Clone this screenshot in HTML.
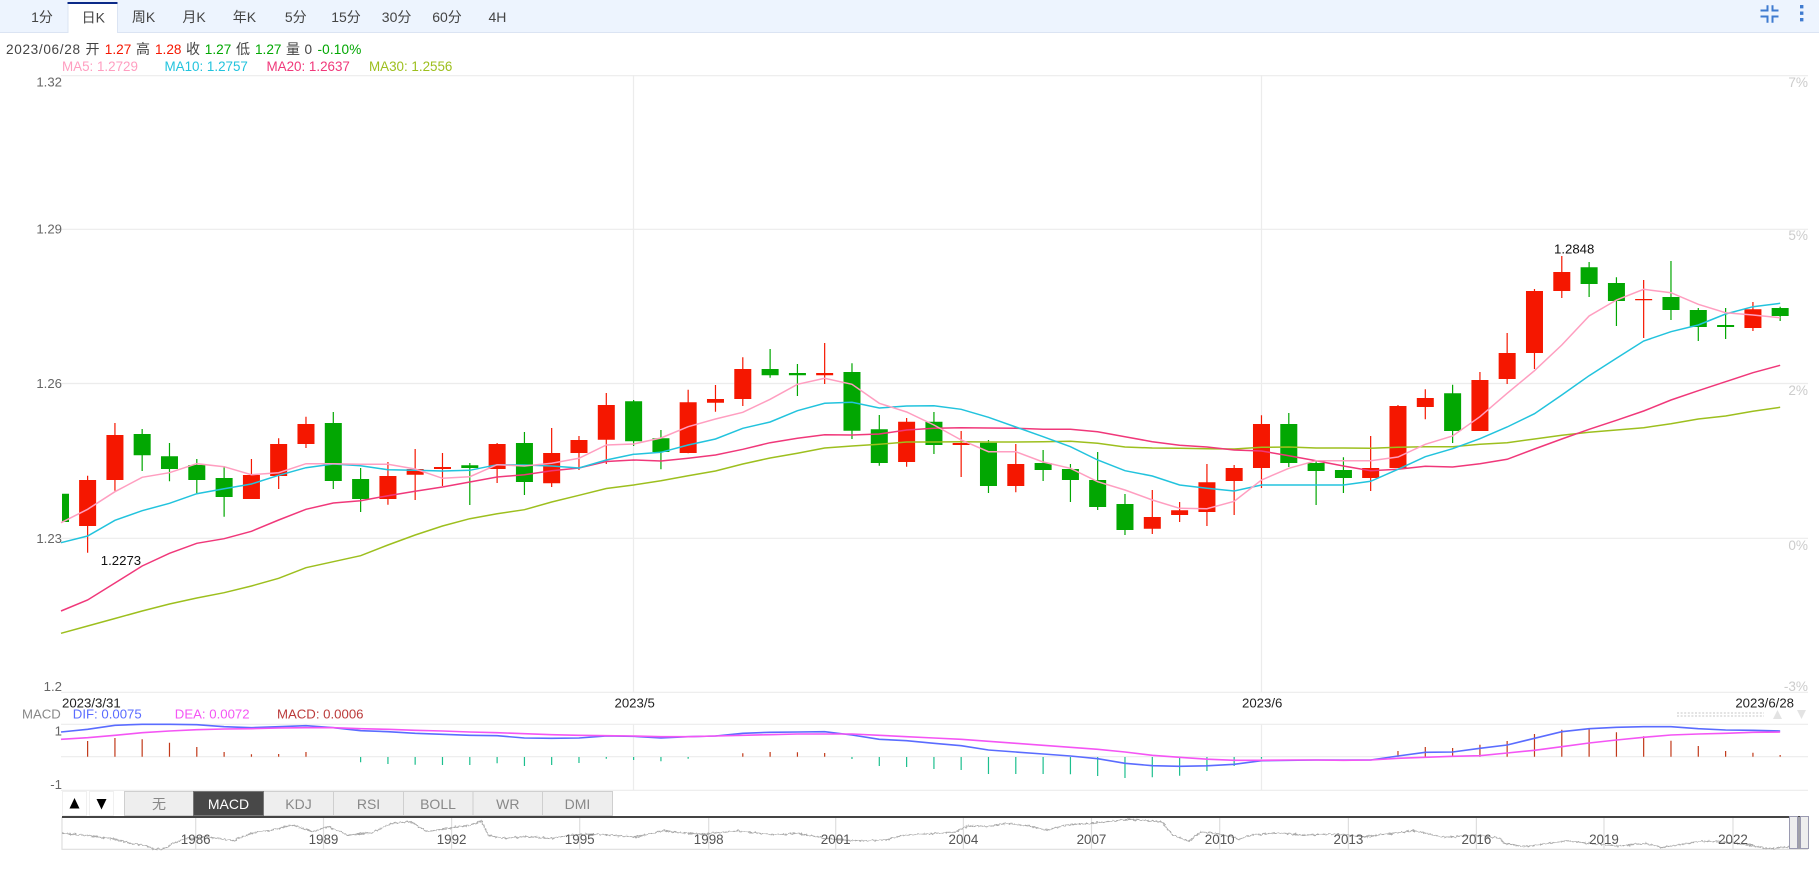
<!DOCTYPE html>
<html lang="zh"><head><meta charset="utf-8"><title>K</title>
<style>
html,body{margin:0;padding:0;background:#fff;width:1819px;height:893px;overflow:hidden}
svg{display:block}
text{font-family:"Liberation Sans","Noto Sans CJK SC",sans-serif;font-size:13.2px}
.t{font-size:14px;fill:#444;text-anchor:middle}
.i{font-size:14px;fill:#444}
.n{font-size:13.6px}
.m{font-size:13.4px}
.r{fill:#f51700}.g{fill:#02a702}
.l{fill:#666;text-anchor:end}
.p{fill:#ccc;text-anchor:end;font-size:13.6px}
.d{fill:#222}
.b{font-size:14px;fill:#888;text-anchor:middle}
.y{fill:#555;text-anchor:middle;font-size:13.4px}
</style></head><body>
<svg width="1819" height="893" viewBox="0 0 1819 893" xmlns="http://www.w3.org/2000/svg">
<defs><filter id="j" x="-2%" y="-30%" width="104%" height="160%"><feTurbulence type="fractalNoise" baseFrequency=".35" numOctaves="2" seed="4"/><feDisplacementMap in="SourceGraphic" scale="3.5" xChannelSelector="R" yChannelSelector="G"/></filter></defs>
<rect width="1819" height="893" fill="#fff"/>
<!-- top tabs -->
<rect width="1819" height="32" fill="#edf4fe"/>
<rect y="32" width="1819" height="1" fill="#dbe4f3"/>
<rect x="67.5" y="2" width="50" height="31" fill="#fff"/>
<rect x="67.5" y="2" width="50" height="2" fill="#0b2a88"/>
<rect x="67.5" y="4" width="1" height="29" fill="#dbe4f3"/><rect x="117" y="4" width="1" height="29" fill="#dbe4f3"/>
<text class="t" x="42" y="22">1分</text><text class="t" x="93.3" y="22.6">日K</text><text class="t" x="143.5" y="22">周K</text><text class="t" x="194" y="22">月K</text><text class="t" x="244.4" y="22">年K</text><text class="t" x="295.8" y="22">5分</text><text class="t" x="346" y="22">15分</text><text class="t" x="396.6" y="22">30分</text><text class="t" x="447" y="22">60分</text><text class="t" x="497.4" y="22">4H</text>
<path d="M1760.5 10.5H1767.5V5.3M1778.5 10.5H1772.5V5.3M1760.5 16.5H1767.5V22.7M1778.5 16.5H1772.5V22.7" fill="none" stroke="#3f7bd0" stroke-width="2"/>
<path d="M1800 5h3.4v3.4H1800zM1800 11.5h3.4v3.4H1800zM1800 18h3.4v3.4H1800z" fill="#3f7bd0"/>
<!-- info -->
<text class="i n" x="6" y="54" textLength="74" lengthAdjust="spacing">2023/06/28</text><text class="i" x="85.5" y="54">开</text><text class="i r n" x="104.8" y="54">1.27</text><text class="i" x="136" y="54">高</text><text class="i r n" x="155" y="54">1.28</text><text class="i" x="186" y="54">收</text><text class="i g n" x="204.8" y="54">1.27</text><text class="i" x="236" y="54">低</text><text class="i g n" x="255" y="54">1.27</text><text class="i" x="286" y="54">量</text><text class="i n" x="304.5" y="54">0</text><text class="i g n" x="317.5" y="54" textLength="43.8" lengthAdjust="spacing">-0.10%</text>
<text class="m" x="62" y="71" fill="#ff9ec0">MA5: 1.2729</text><text class="m" x="164.5" y="71" fill="#22c3dd">MA10: 1.2757</text><text class="m" x="266.5" y="71" fill="#f0387a">MA20: 1.2637</text><text class="m" x="369" y="71" fill="#9dbf1e">MA30: 1.2556</text>
<!-- grid -->
<path d="M61 75.7H1808M61 229.3H1808M61 383.5H1808M61 538.3H1808M61 692.3H1808M61 724.3H1808M61 756.7H1808M61 790.3H1808M633.5 75V692M633.5 724V790M1261.5 75V692M1261.5 724V790" stroke="#ececec" stroke-width="1.2" fill="none"/>
<text class="l" x="62" y="86.5">1.32</text><text class="l" x="62" y="233.5">1.29</text><text class="l" x="62" y="388">1.26</text><text class="l" x="62" y="543">1.23</text><text class="l" x="62" y="691">1.2</text>
<text class="p" x="1808" y="87">7%</text><text class="p" x="1808" y="240">5%</text><text class="p" x="1808" y="395">2%</text><text class="p" x="1808" y="550">0%</text><text class="p" x="1808" y="691">-3%</text>
<g transform="translate(60.3 0) scale(1.00073 1) translate(-60.3 0)">
<!-- candles wicks -->
<path fill="none" stroke="#f51700" stroke-width="1.2" d="M87.6 475.7V552.7M114.9 423V490.7M251.3 459V499M278.5 438.3V489M305.8 416.7V448M387.7 462V504.7M414.9 449V500M442.2 453V486M496.8 443V483M551.3 428V487M578.6 436V470M605.9 393V464M687.7 389.7V453.3M715 385V411.7M742.3 357.3V406M824.1 343V384M906 418V466.7M960.5 431V477M1015.1 444V492.3M1151.5 490V534M1178.8 502V522M1206.1 464V526M1233.3 465V515M1260.6 415.3V488M1369.7 436V491M1397 405V468M1424.3 389.3V419.3M1478.9 372V431M1506.1 333V384M1533.4 289V369M1560.7 256V298M1642.5 280V338M1751.7 302V331"/>
<path fill="none" stroke="#02a702" stroke-width="1.2" d="M142.1 429V471M169.4 443V481.3M196.7 459V493.3M224 466V516.7M333.1 412V489M360.4 468V512M469.5 463V505M524.1 432V495M633.2 400V446M660.5 430V469.3M769.6 349V377.7M796.9 364V396M851.4 363.3V439M878.7 415V465.7M933.3 412V454M987.8 440V493M1042.4 450V481M1069.7 464V502M1096.9 452V510M1124.2 494V535M1287.9 413V467M1315.2 460V505M1342.5 457.3V493M1451.6 384.7V443M1588 262V297M1615.3 277.3V326M1669.8 261V320M1697.1 308V341M1724.4 308V339M1778.9 306.7V321"/>
<!-- candle bodies -->
<path fill="#f51700" d="M79.1 480h17v46h-17zM106.4 435h17v45h-17zM242.8 475h17v24h-17zM270 444h17v32h-17zM297.3 424h17v20h-17zM379.2 476h17v23h-17zM406.4 469h17v5.7h-17zM433.7 467h17v2h-17zM488.3 444h17v25h-17zM542.8 453h17v30.3h-17zM570.1 440h17v13h-17zM597.4 405h17v34.7h-17zM679.2 402.3h17v50.7h-17zM706.5 399h17v3.7h-17zM733.8 369h17v30h-17zM815.6 373h17v2.3h-17zM897.5 421.7h17v40.3h-17zM952 443h17v2h-17zM1006.6 464h17v22h-17zM1143 517h17v11.7h-17zM1170.3 510.3h17v4.7h-17zM1197.6 482.3h17v29.7h-17zM1224.8 468h17v13h-17zM1252.1 424h17v44h-17zM1361.2 468h17v10h-17zM1388.5 406h17v62h-17zM1415.8 398h17v9h-17zM1470.4 380h17v51h-17zM1497.6 353h17v26h-17zM1524.9 291h17v62h-17zM1552.2 272h17v19h-17zM1634 299h17v1.2h-17zM1743.2 309.3h17v18.7h-17z"/>
<path fill="#02a702" d="M62 493.7h7v28.3h-7zM133.6 434h17v21.3h-17zM160.9 456.3h17v12.7h-17zM188.2 465h17v15h-17zM215.5 478h17v19h-17zM324.6 423h17v58h-17zM351.9 479h17v20h-17zM461 465.3h17v2.7h-17zM515.6 443h17v39h-17zM624.7 401.3h17v40h-17zM652 438.3h17v13.7h-17zM761.1 369h17v6.3h-17zM788.4 373h17v2.3h-17zM842.9 372h17v58.7h-17zM870.2 429.3h17v33.7h-17zM924.8 421.7h17v23.3h-17zM979.3 442.7h17v43.3h-17zM1033.9 463h17v7h-17zM1061.2 469h17v11h-17zM1088.4 480h17v27h-17zM1115.7 504h17v26h-17zM1279.4 424h17v39h-17zM1306.7 463h17v8h-17zM1334 470h17v8h-17zM1443.1 393.3h17v37.7h-17zM1579.5 267.3h17v16.7h-17zM1606.8 283h17v18h-17zM1661.3 297h17v13h-17zM1688.6 310h17v17h-17zM1715.9 325h17v2h-17zM1770.4 308h17v8h-17z"/>
<!-- MA lines -->
<polyline fill="none" stroke="#9dbf1e" stroke-width="1.5" points="61,633.3 87.6,626 114.9,618.5 142.1,611 169.4,604 196.7,598 224,592.7 251.3,586 278.5,578.3 305.8,567.7 333.1,561.7 360.4,555.7 387.7,545 414.9,535 442.2,526 469.5,518.7 496.8,513.7 524.1,509.7 551.3,502 578.6,495.3 605.9,488.5 633.2,485 660.5,480.7 687.7,475.7 715,471 742.3,464 769.6,458 796.9,453.3 824.1,448 851.4,446 878.7,444.3 906,442 933.3,442 960.5,441.7 987.8,442 1015.1,442 1042.4,441.7 1069.7,441.3 1096.9,443.3 1124.2,447 1151.5,448 1178.8,448.3 1206.1,448.7 1233.3,449 1260.6,447.3 1287.9,447 1315.2,448 1342.5,448 1369.7,448.3 1397,447.3 1424.3,446.7 1451.6,446.7 1478.9,444.3 1506.1,442.7 1533.4,439 1560.7,435.3 1588,432.3 1615.3,430 1642.5,427.7 1669.8,423.7 1697.1,419 1724.4,416 1751.7,411.3 1778.9,407.3"/>
<polyline fill="none" stroke="#f0387a" stroke-width="1.5" points="61,611 87.6,600 114.9,583 142.1,566 169.4,553.3 196.7,543.3 224,538.7 251.3,531.3 278.5,520 305.8,509.3 333.1,503 360.4,500.7 387.7,495.7 414.9,491.3 442.2,487 469.5,482 496.8,477 524.1,474.7 551.3,470.7 578.6,468 605.9,461.5 633.2,460 660.5,461 687.7,458.3 715,455 742.3,449.3 769.6,442.7 796.9,438.3 824.1,434.7 851.4,435 878.7,434 906,430 933.3,428.3 960.5,427.7 987.8,428 1015.1,428.3 1042.4,429.3 1069.7,429.3 1096.9,431.7 1124.2,436.7 1151.5,441.7 1178.8,445.3 1206.1,447 1233.3,450 1260.6,451 1287.9,455.7 1315.2,460.7 1342.5,466 1369.7,470.7 1397,469.3 1424.3,466.3 1451.6,467 1478.9,463.7 1506.1,459.3 1533.4,449 1560.7,439 1588,429.3 1615.3,420.3 1642.5,411 1669.8,400 1697.1,390.7 1724.4,381.7 1751.7,372.7 1778.9,365.3"/>
<polyline fill="none" stroke="#22c3dd" stroke-width="1.5" points="61,542.7 87.6,536 114.9,520.3 142.1,510.7 169.4,503.3 196.7,493.7 224,488.7 251.3,484 278.5,475.3 305.8,467.7 333.1,464 360.4,465.7 387.7,469.7 414.9,470.3 442.2,471 469.5,470.3 496.8,464.7 524.1,465 551.3,466 578.6,468 605.9,460 633.2,454.3 660.5,452.3 687.7,445 715,439 742.3,428.3 769.6,422 796.9,410.7 824.1,403.3 851.4,402.3 878.7,408 906,406 933.3,405.7 960.5,409.3 987.8,417.3 1015.1,427 1042.4,436.7 1069.7,446.7 1096.9,460 1124.2,470.7 1151.5,476 1178.8,485 1206.1,488.3 1233.3,491 1260.6,485 1287.9,485 1315.2,485 1342.5,485 1369.7,481.3 1397,469.3 1424.3,456.7 1451.6,448.7 1478.9,438.7 1506.1,427 1533.4,413.7 1560.7,395 1588,375.7 1615.3,358.3 1642.5,341 1669.8,331.7 1697.1,325 1724.4,314 1751.7,306.7 1778.9,303.3"/>
<polyline fill="none" stroke="#ff9ec0" stroke-width="1.5" points="61,522.7 87.6,509.3 114.9,491.7 142.1,477.3 169.4,472.7 196.7,463.7 224,466.7 251.3,474.7 278.5,472.7 305.8,463.7 333.1,463.7 360.4,464.3 387.7,464.3 414.9,469 442.2,478.3 469.5,476.7 496.8,464.7 524.1,466 551.3,463.3 578.6,458.3 605.9,445 633.2,444 660.5,438 687.7,426.7 715,419 742.3,412.3 769.6,399.3 796.9,384.3 824.1,378.3 851.4,384.3 878.7,403.3 906,412 933.3,425 960.5,440 987.8,451.7 1015.1,451.7 1042.4,462 1069.7,468.3 1096.9,481.7 1124.2,490 1151.5,500 1178.8,508.3 1206.1,508.7 1233.3,501.3 1260.6,480 1287.9,468.3 1315.2,460.7 1342.5,460.7 1369.7,460.7 1397,457 1424.3,444.3 1451.6,436 1478.9,416.7 1506.1,393.3 1533.4,370.7 1560.7,345 1588,316 1615.3,300 1642.5,289.3 1669.8,292.7 1697.1,304.3 1724.4,312.7 1751.7,315 1778.9,317.7"/>
</g>
<text x="100.8" y="565" fill="#111">1.2273</text><text x="1554" y="253.5" fill="#111">1.2848</text>
<!-- dates -->
<text class="d" x="62" y="707.5">2023/3/31</text><text class="d" x="614.5" y="707.5">2023/5</text><text class="d" x="1242" y="707.5">2023/6</text><text class="d" x="1794" y="707.5" text-anchor="end">2023/6/28</text>
<!-- macd -->
<text x="22" y="718.5" fill="#888">MACD</text><text x="72.8" y="718.5" fill="#5a6cff">DIF: 0.0075</text><text x="174.8" y="718.5" fill="#f455f4">DEA: 0.0072</text><text x="277" y="718.5" fill="#bb3a3a">MACD: 0.0006</text>
<text class="l" x="62" y="735.5" fill="#555">1</text><text class="l" x="62" y="789" fill="#555">-1</text>
<path d="M1677 713h87M1677 716h87" stroke="#e3e3e3" stroke-width="2" stroke-dasharray="2 1.6" fill="none"/>
<path d="M1773 719l4.5-9 4.5 9zM1797 710h9l-4.5 9z" fill="#e3e3e3"/>
<g transform="translate(60.3 0) scale(1.00073 1) translate(-60.3 0)">
<path fill="none" stroke="#c23a1a" stroke-width="1.2" d="M87.6 756.7V741M114.9 756.7V738M142.1 756.7V739.3M169.4 756.7V742.7M196.7 756.7V747M224 756.7V752M251.3 756.7V754.3M278.5 756.7V754M305.8 756.7V752M742.3 756.7V753.3M769.6 756.7V752M796.9 756.7V752.3M824.1 756.7V753M1397 756.7V751M1424.3 756.7V747M1451.6 756.7V748M1478.9 756.7V744.7M1506.1 756.7V741M1533.4 756.7V734M1560.7 756.7V729.7M1588 756.7V729.3M1615.3 756.7V732.3M1642.5 756.7V736.3M1669.8 756.7V740.7M1697.1 756.7V746M1724.4 756.7V751M1751.7 756.7V752.7M1778.9 756.7V755"/>
<path fill="none" stroke="#1dbf8e" stroke-width="1.2" d="M360.4 757V762.3M387.7 757V764M414.9 757V764.7M442.2 757V765M469.5 757V765M496.8 757V763.3M524.1 757V766M551.3 757V765M578.6 757V763M605.9 757V758.7M633.2 757V760M660.5 757V761.3M687.7 757V758.7M851.4 757V759M878.7 757V766M906 757V767M933.3 757V769M960.5 757V770M987.8 757V774M1015.1 757V774M1042.4 757V774M1069.7 757V774.3M1096.9 757V776M1124.2 757V778M1151.5 757V777.3M1178.8 757V775.7M1206.1 757V771M1233.3 757V766M1260.6 757V758.7"/>
<polyline fill="none" stroke="#5a6cff" stroke-width="1.6" points="61,732 87.6,729.3 114.9,725.3 142.1,724.3 169.4,724.3 196.7,724.7 224,726.7 251.3,727.7 278.5,726.7 305.8,725.7 333.1,727.7 360.4,730.7 387.7,731.7 414.9,733.3 442.2,734.3 469.5,735.3 496.8,735.7 524.1,738 551.3,738.3 578.6,738 605.9,736 633.2,736.3 660.5,738 687.7,736.7 715,736 742.3,733.3 769.6,732.3 796.9,732 824.1,731.7 851.4,735 878.7,739.3 906,740.7 933.3,743.3 960.5,745.7 987.8,750 1015.1,752 1042.4,754 1069.7,756 1096.9,758.7 1124.2,763.3 1151.5,765.7 1178.8,766.3 1206.1,765.8 1233.3,764.3 1260.6,760.7 1287.9,760.3 1315.2,760 1342.5,760 1369.7,760 1397,756 1424.3,752.3 1451.6,752 1478.9,748.3 1506.1,745 1533.4,738.3 1560.7,731.7 1588,728.7 1615.3,727.3 1642.5,726.7 1669.8,726.7 1697.1,728.7 1724.4,730 1751.7,730.3 1778.9,731"/>
<polyline fill="none" stroke="#f455f4" stroke-width="1.6" points="61,739.3 87.6,737.7 114.9,735.3 142.1,732.7 169.4,731 196.7,729.7 224,729 251.3,728.7 278.5,728 305.8,727.7 333.1,727.7 360.4,728.7 387.7,729.3 414.9,730.3 442.2,731 469.5,732 496.8,732.7 524.1,733.7 551.3,734.7 578.6,735.3 605.9,735.7 633.2,736 660.5,736.7 687.7,736.7 715,736 742.3,735.3 769.6,734.7 796.9,734 824.1,734 851.4,734 878.7,735.3 906,736.7 933.3,738 960.5,739.3 987.8,741.3 1015.1,743.3 1042.4,745.3 1069.7,747.3 1096.9,749.3 1124.2,752 1151.5,755.3 1178.8,757.3 1206.1,759.2 1233.3,760.3 1260.6,760.3 1287.9,760 1315.2,760 1342.5,760.3 1369.7,760 1397,758.3 1424.3,757.3 1451.6,756.3 1478.9,755.7 1506.1,753 1533.4,750.3 1560.7,746.7 1588,743 1615.3,740 1642.5,737.3 1669.8,735 1697.1,734 1724.4,733.3 1751.7,732.3 1778.9,732"/>
</g>
<!-- indicator buttons -->
<rect x="62.5" y="791.5" width="24" height="24" fill="#fff" stroke="#f0f0f0"/><rect x="89.5" y="791.5" width="24" height="24" fill="#fff" stroke="#f0f0f0"/>
<path d="M69.5 808.5l5-10.5 5 10.5zM96.5 799h10l-5 10.5z" fill="#000"/>
<g fill="#eee" stroke="#cfcfcf"><rect x="124.5" y="791.5" width="69" height="24"/><rect x="263.5" y="791.5" width="70" height="24"/><rect x="333.5" y="791.5" width="70" height="24"/><rect x="403.5" y="791.5" width="69.5" height="24"/><rect x="473" y="791.5" width="69.5" height="24"/><rect x="542.5" y="791.5" width="70" height="24"/></g>
<rect x="193.5" y="791.5" width="70" height="24" fill="#484848" stroke="#777"/>
<text class="b" x="159" y="809">无</text><text class="b" x="228.5" y="809" style="fill:#fff">MACD</text><text class="b" x="298.5" y="809">KDJ</text><text class="b" x="368.5" y="809">RSI</text><text class="b" x="438" y="809">BOLL</text><text class="b" x="507.8" y="809">WR</text><text class="b" x="577.5" y="809">DMI</text>
<!-- navigator -->
<path d="M62 817V849.3H1808M195.7 817V849M323.5 817V849M451.6 817V849M579.7 817V849M708.7 817V849M835.7 817V849M963.4 817V849M1091.5 817V849M1219.7 817V849M1348.4 817V849M1476.4 817V849M1604 817V849M1733 817V849" stroke="#dedede" stroke-width="1.2" fill="none"/>
<polyline filter="url(#j)" fill="none" stroke="#aaa" stroke-width="1.1" points="62,833.3 83,835 115,839.3 130.5,843.3 146,845.7 154,849 162,849.3 174,843.3 186,838.3 205.6,836.7 233,840.7 253,832.7 273,830 292.6,825 312,831.7 328,826.7 348,835 372,832.7 391.5,823.3 411,821.7 427,831.7 447,828.3 470.5,825 481.6,821 488,835 502,838.3 526,836.7 553.6,838.3 569,835 593,834 636,837 663,830.7 687,833.3 703,834 738,831 774,835 798,833.3 825,838.3 857,841 885,840 904.5,835 928,834 956,831.7 968,825.7 987.5,826.7 1007,823.3 1027,825.7 1047,830 1066.6,825 1090,823.3 1130,819.3 1161.5,821.7 1173,835 1189,841 1201,831.7 1220,834 1239.5,839.3 1251,835 1279,832.7 1303,835 1334,834 1366,836.7 1413,830.7 1445,837.3 1476,835 1500,838.3 1504,843.3 1524,846.7 1567,840.7 1595,844 1618.6,846 1646,843.3 1662,847.7 1701,841 1729,842.3 1753,845.7 1768.5,849 1788,846.7"/>
<g><text class="y" x="195.7" y="844">1986</text><text class="y" x="323.5" y="844">1989</text><text class="y" x="451.6" y="844">1992</text><text class="y" x="579.7" y="844">1995</text><text class="y" x="708.7" y="844">1998</text><text class="y" x="835.7" y="844">2001</text><text class="y" x="963.4" y="844">2004</text><text class="y" x="1091.5" y="844">2007</text><text class="y" x="1219.7" y="844">2010</text><text class="y" x="1348.4" y="844">2013</text><text class="y" x="1476.4" y="844">2016</text><text class="y" x="1604" y="844">2019</text><text class="y" x="1733" y="844">2022</text></g>
<rect x="62" y="816" width="1746" height="2" fill="#444"/>
<rect x="1797" y="817" width="4" height="32" fill="#a0a0a8"/>
<rect x="1789.5" y="816.5" width="8" height="32" fill="#eee" stroke="#9a9ab0"/><rect x="1800.5" y="816.5" width="8" height="32" fill="#eee" stroke="#9a9ab0"/>
</svg>
</body></html>
